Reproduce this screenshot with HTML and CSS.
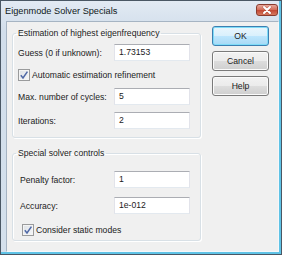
FILE: index.html
```html
<!DOCTYPE html>
<html>
<head>
<meta charset="utf-8">
<link rel="stylesheet" href="styles.css">
</head>
<body>
<div class="window">
  <div class="titlebar">
    <span class="title">Eigenmode Solver Specials</span>
    <span class="close"><svg width="22" height="12" viewBox="0 0 22 12"><path d="M8 3 L14 9 M14 3 L8 9" stroke="#7a2a20" stroke-width="3" stroke-linecap="round" opacity="0.35"/><path d="M8 3 L14 9 M14 3 L8 9" stroke="#ffffff" stroke-width="2" stroke-linecap="round"/></svg></span>
  </div>
  <div class="client">
    <div class="forms">
      <fieldset class="group g1">
        <legend>Estimation of highest eigenfrequency</legend>
        <div class="rows">
          <div class="row"><span class="label">Guess (0 if unknown):</span><span class="input">1.73153</span></div>
          <div class="check"><span class="box"><svg width="10" height="10" viewBox="0 0 10 10"><path d="M1.8 5.2 L4 8 L8.4 1.6" fill="none" stroke="#4f68a6" stroke-width="1.5"/></svg></span><span>Automatic estimation refinement</span></div>
          <div class="row"><span class="label">Max. number of cycles:</span><span class="input">5</span></div>
          <div class="row"><span class="label">Iterations:</span><span class="input">2</span></div>
        </div>
      </fieldset>
      <fieldset class="group g2">
        <legend>Special solver controls</legend>
        <div class="rows">
          <div class="row"><span class="label">Penalty factor:</span><span class="input">1</span></div>
          <div class="row"><span class="label">Accuracy:</span><span class="input">1e-012</span></div>
          <div class="check"><span class="box"><svg width="10" height="10" viewBox="0 0 10 10"><path d="M1.8 5.2 L4 8 L8.4 1.6" fill="none" stroke="#4f68a6" stroke-width="1.5"/></svg></span><span>Consider static modes</span></div>
        </div>
      </fieldset>
    </div>
    <div class="buttons">
      <span class="btn default">OK</span>
      <span class="btn">Cancel</span>
      <span class="btn">Help</span>
    </div>
  </div>
</div>
</body>
</html>
```
FILE: styles.css
```css
html, body {
  margin: 0;
  padding: 0;
  background: #ffffff;
}
.window {
  width: 282px;
  height: 255px;
  box-sizing: border-box;
  border: 1px solid #4a5764;
  background: linear-gradient(#e2eaf3, #d2deeb 30px, #d4e0ec);
  box-shadow: inset -2px -2px 0 #5fc3e6;
  display: flex;
  flex-direction: column;
  font-family: "Liberation Sans", Arial, sans-serif;
  color: #1c1c1c;
}
.titlebar {
  height: 20px;
  display: flex;
  justify-content: space-between;
  align-items: flex-start;
  padding: 0 3px 0 4px;
}
.title {
  font-size: 9.2px;
  line-height: 12px;
  margin-top: 4px;
  color: #101820;
}
.close {
  width: 22px;
  height: 12px;
  margin-top: 3px;
  box-sizing: border-box;
  border: 1px solid #8a3b2e;
  border-radius: 3px;
  background: linear-gradient(#e9a99b, #d4705d 45%, #c44a36 55%, #d77a5f);
  display: flex;
  overflow: hidden;
}
.close svg {
  margin: -1px;
}
.client {
  flex: 1;
  margin: 0 2px 2px 5px;
  background: #f0f0f0;
  border: 1px solid #a6b4c3;
  border-right-color: #f4f7fa;
  border-bottom-color: #f4f7fa;
  display: grid;
  grid-template-columns: 189px 57px;
  column-gap: 11px;
  align-items: start;
  padding: 4px 0 0 5px;
  font-size: 8.65px;
}
.forms {
  padding-top: 2px;
  display: flex;
  flex-direction: column;
}
.group {
  margin: 0;
  border: 1px solid #d8e0e6;
  border-radius: 3px;
  box-shadow: inset 1px 1px 0 #ffffff, 1px 1px 0 #ffffff;
  min-inline-size: 0;
}
.group legend {
  padding: 0 2px;
  line-height: 11px;
}
.g1 {
  padding: 5px 0 8px 3px;
}
.g2 {
  margin-top: 10px;
  padding: 12px 0 4px 3px;
}
.rows {
  display: flex;
  flex-direction: column;
}
.g1 .rows {
  padding-left: 2px;
  gap: 7px;
}
.g2 .rows {
  padding-left: 4px;
  gap: 9px;
}
.row {
  display: grid;
  align-items: center;
  height: 17px;
}
.g1 .row {
  grid-template-columns: 96px 76px;
}
.g2 .row {
  grid-template-columns: 94px 76px;
}
.input {
  height: 17px;
  box-sizing: border-box;
  background: #ffffff;
  border: 1px solid #e2e3ea;
  border-top-color: #abadb3;
  border-bottom-color: #e3e9ef;
  padding-left: 4px;
  line-height: 15px;
}
.check {
  display: flex;
  align-items: center;
  gap: 2px;
  height: 13px;
}
.g2 .check {
  margin-left: 2px;
}
.box {
  width: 12px;
  height: 12px;
  box-sizing: border-box;
  border: 1px solid #9a9b9c;
  background: linear-gradient(135deg, #dde1e6, #f6f7f8);
  box-shadow: inset 0 0 0 1px #f4f4f4;
  display: flex;
  align-items: center;
  justify-content: center;
}
.buttons {
  display: flex;
  flex-direction: column;
  gap: 5px;
}
.btn {
  height: 20px;
  box-sizing: border-box;
  border: 1px solid #7a7a7a;
  border-radius: 3px;
  background: linear-gradient(#f2f2f2, #ebebeb 50%, #dddddd 50%, #cfcfcf);
  box-shadow: inset 0 0 0 1px #fbfbfb;
  display: flex;
  align-items: center;
  justify-content: center;
  line-height: 12px;
}
.btn.default {
  border-color: #3c7fb1;
  background: linear-gradient(#eaf6fd, #d9f0fc 50%, #bee6fd 50%, #a7d9f5);
  box-shadow: inset 0 0 0 1px #7fdcf8;
}
```
